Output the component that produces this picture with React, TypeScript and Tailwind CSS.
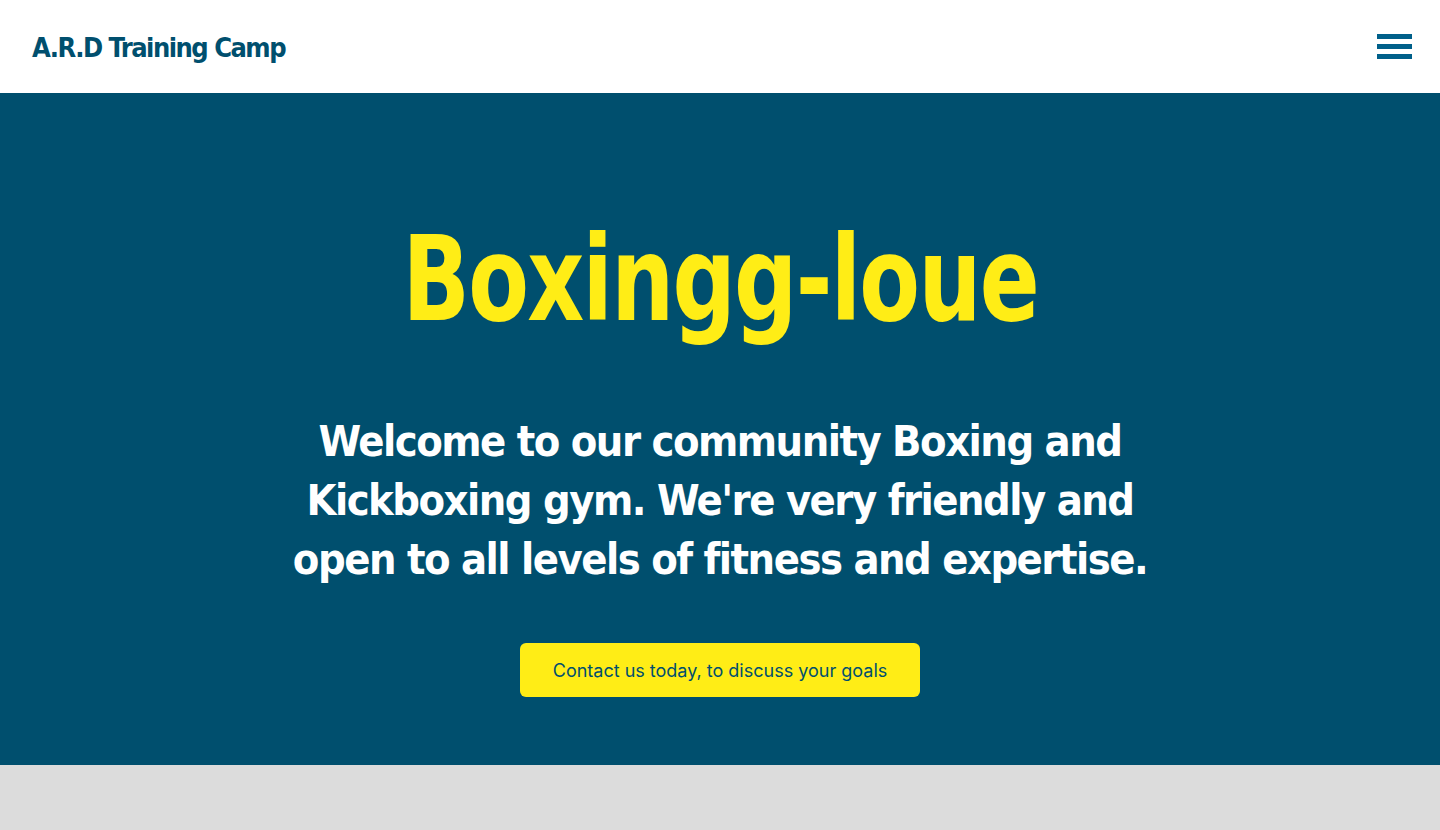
export default function App() {
  return (
    <div className="min-h-screen bg-[#dcdcdc]">
      <header className="flex h-[93px] items-center justify-between bg-white pl-8 pr-7">
        <a
          href="#"
          className="pt-1 text-[27px] font-bold tracking-[-1.5px] text-[#004f6e]"
          style={{ fontFamily: '"DejaVu Sans Condensed", sans-serif' }}
        >
          A.R.D Training Camp
        </a>
        <button type="button" aria-label="Menu" className="flex w-[35px] flex-col gap-[5px]">
          <span className="block h-[5px] w-full bg-[#00608a]" />
          <span className="block h-[5px] w-full bg-[#00608a]" />
          <span className="block h-[5px] w-full bg-[#00608a]" />
        </button>
      </header>

      <section className="flex h-[672px] flex-col items-center bg-[#004f6e] px-8 pt-[128px] text-center">
        <h1
          className="scale-x-[0.84] text-[117px] font-bold leading-none tracking-[-2px] text-[#ffed16]"
          style={{ fontFamily: '"DejaVu Sans Condensed", sans-serif' }}
        >
          Boxingg-loue
        </h1>
        <p
          className="mt-[74px] max-w-[880px] text-[43px] font-bold leading-[59px] tracking-[-1.5px] text-white"
          style={{ fontFamily: '"DejaVu Sans Condensed", sans-serif' }}
        >
          Welcome to our community Boxing and Kickboxing gym. We're very friendly and open to all levels of fitness and expertise.
        </p>
        <a
          href="#"
          className="mt-[54px] flex h-[54px] w-[400px] items-center justify-center rounded-md bg-[#ffed16] text-[18px] text-[#004f6e]"
          style={{ fontFamily: 'Inter, "Liberation Sans", sans-serif' }}
        >
          Contact us today, to discuss your goals
        </a>
      </section>
    </div>
  );
}
